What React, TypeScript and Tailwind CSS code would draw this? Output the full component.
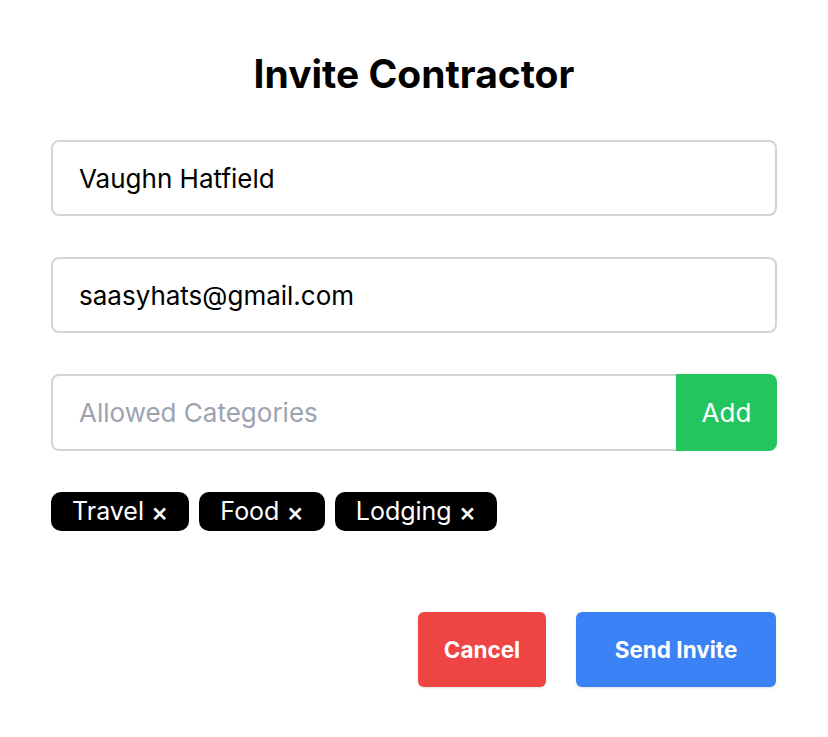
import * as React from "react";

const tags = ["Travel", "Food", "Lodging"];

export default function App() {
  const [name, setName] = React.useState("Vaughn Hatfield");
  const [email, setEmail] = React.useState("saasyhats@gmail.com");
  const [category, setCategory] = React.useState("");
  const [categories, setCategories] = React.useState<string[]>(tags);

  return (
    <div
      className="min-h-[737px] w-full bg-white text-black"
      style={{ fontFamily: "Inter, 'Noto Sans', sans-serif" }}
    >
      <div className="flex flex-col px-[51px] pt-[50px] pb-[51px]">
        <h1 className="text-center text-[39px] leading-[48px] font-bold">
          Invite Contractor
        </h1>

        <div className="mt-[42px] flex flex-col gap-[41px]">
          {/* Name */}
          <input
            value={name}
            onChange={(e) => setName(e.target.value)}
            className="h-[76px] w-full rounded-lg border-2 border-[#d4d4d4] bg-white px-[26px] text-[26px] outline-none"
          />

          {/* Email */}
          <input
            value={email}
            onChange={(e) => setEmail(e.target.value)}
            className="h-[76px] w-full rounded-lg border-2 border-[#d4d4d4] bg-white px-[26px] text-[26px] outline-none"
          />

          {/* Categories */}
          <div className="flex h-[77px] w-full">
            <input
              value={category}
              placeholder="Allowed Categories"
              onChange={(e) => setCategory(e.target.value)}
              className="h-full min-w-0 flex-1 rounded-l-lg border-2 border-r-0 border-[#d4d4d4] bg-white px-[26px] text-[26px] outline-none placeholder:text-[#9ca3af]"
            />
            <button
              type="button"
              onClick={() => {
                if (category.trim()) {
                  setCategories([...categories, category.trim()]);
                  setCategory("");
                }
              }}
              className="h-full w-[101px] rounded-r-lg bg-[#22c55e] text-[26px] text-white"
            >
              Add
            </button>
          </div>

          {/* Tags */}
          <div className="flex flex-wrap gap-[10px]">
            {categories.map((tag) => (
              <span
                key={tag}
                className="flex h-[39px] items-center rounded-[10px] bg-black pl-[21px] pr-[21px] text-[25px] leading-none text-white"
              >
                {tag}
                <button
                  type="button"
                  onClick={() => setCategories(categories.filter((c) => c !== tag))}
                  className="ml-[7px] text-[26px] leading-none font-medium"
                >
                  ×
                </button>
              </span>
            ))}
          </div>
        </div>

        {/* Actions */}
        <div className="mt-[81px] flex justify-end gap-[30px] pr-px">
          <button
            type="button"
            className="h-[75px] w-[128px] rounded-md bg-[#ef4444] text-[22.5px] font-bold text-white shadow-sm"
          >
            Cancel
          </button>
          <button
            type="button"
            className="h-[75px] w-[200px] rounded-md bg-[#3b82f6] text-[22.5px] font-bold text-white shadow-sm"
          >
            Send Invite
          </button>
        </div>
      </div>
    </div>
  );
}
